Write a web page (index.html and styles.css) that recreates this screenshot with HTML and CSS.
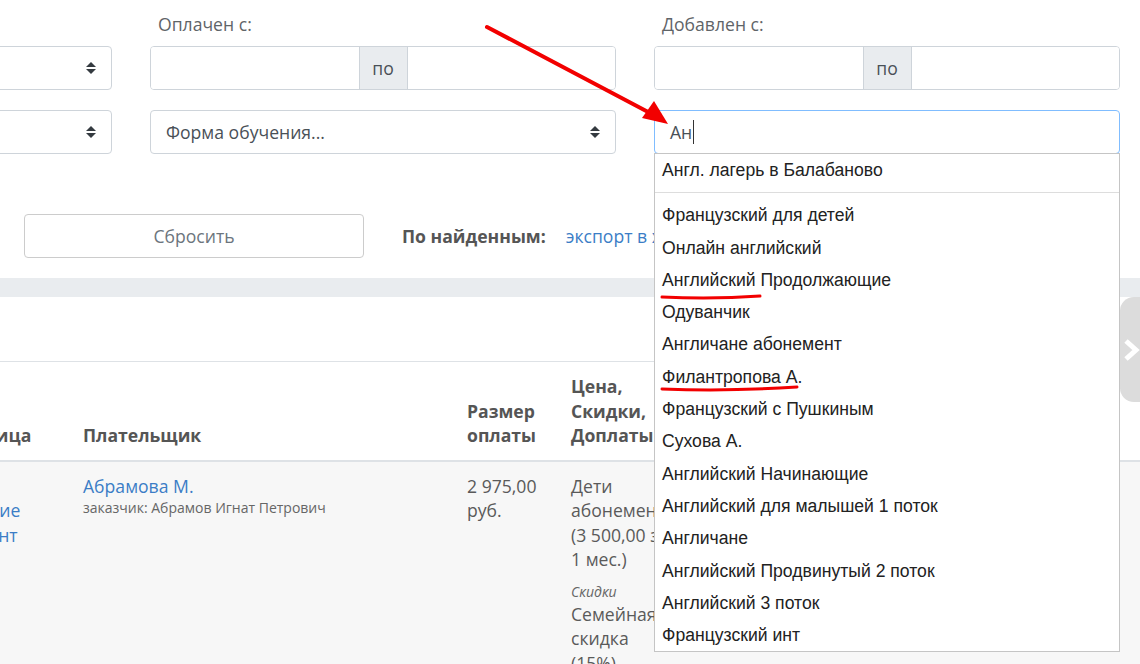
FILE: index.html
```html
<!DOCTYPE html>
<html lang="ru">
<head>
<meta charset="utf-8">
<title>Оплаты</title>
<link rel="stylesheet" href="styles.css">
</head>
<body>
<div class="page">
  <section class="filters">
    <div class="filter-grid">
      <div class="field">
        <div class="label">Статус:</div>
        <div class="select"><span class="select-text">Все</span>
          <svg class="arrows" viewBox="0 0 10 12" width="10" height="12"><polygon points="5,0 10,5 0,5"/><polygon points="0,7 10,7 5,12"/></svg>
        </div>
      </div>
      <div class="field">
        <div class="label">Оплачен с:</div>
        <div class="input-group">
          <div class="input"></div>
          <div class="addon">по</div>
          <div class="input"></div>
        </div>
      </div>
      <div class="field">
        <div class="label">Добавлен с:</div>
        <div class="input-group">
          <div class="input"></div>
          <div class="addon">по</div>
          <div class="input"></div>
        </div>
      </div>

      <div class="field">
        <div class="select"><span class="select-text">Все</span>
          <svg class="arrows" viewBox="0 0 10 12" width="10" height="12"><polygon points="5,0 10,5 0,5"/><polygon points="0,7 10,7 5,12"/></svg>
        </div>
      </div>
      <div class="field">
        <div class="select"><span class="select-text">Форма обучения...</span>
          <svg class="arrows" viewBox="0 0 10 12" width="10" height="12"><polygon points="5,0 10,5 0,5"/><polygon points="0,7 10,7 5,12"/></svg>
        </div>
      </div>
      <div class="field field-auto">
        <div class="input focused"><span>Ан</span><span class="caret"></span></div>
        <ul class="autocomplete">
          <li class="item">Англ. лагерь в Балабаново</li>
          <li class="divider"></li>
          <li class="item">Французский для детей</li>
          <li class="item">Онлайн английский</li>
          <li class="item">Английский Продолжающие</li>
          <li class="item">Одуванчик</li>
          <li class="item">Англичане абонемент</li>
          <li class="item">Филантропова А.</li>
          <li class="item">Французский с Пушкиным</li>
          <li class="item">Сухова А.</li>
          <li class="item">Английский Начинающие</li>
          <li class="item">Английский для малышей 1 поток</li>
          <li class="item">Англичане</li>
          <li class="item">Английский Продвинутый 2 поток</li>
          <li class="item">Английский 3 поток</li>
          <li class="item">Французский инт</li>
        </ul>
      </div>
    </div>

    <div class="actions">
      <button class="btn-reset" type="button">Сбросить</button>
      <div class="found">
        <span class="found-label">По найденным:</span>
        <a class="link" href="#">экспорт в xls</a>
      </div>
    </div>
  </section>

  <div class="band"></div>

  <section class="results">
    <div class="results-top"></div>
    <table class="table">
      <colgroup>
        <col class="c1"><col class="c2"><col class="c3"><col class="c4"><col class="c5">
      </colgroup>
      <thead>
        <tr>
          <th>Единица</th>
          <th>Плательщик</th>
          <th>Размер<br>оплаты</th>
          <th>Цена,<br>Скидки,<br>Доплаты</th>
          <th>Статус</th>
        </tr>
      </thead>
      <tbody>
        <tr>
          <td><a class="link" href="#">Курс<br>Занятие<br>Студент</a></td>
          <td>
            <a class="link" href="#">Абрамова М.</a>
            <div class="small">заказчик: Абрамов Игнат Петрович</div>
          </td>
          <td>2 975,00<br>руб.</td>
          <td>
            <div>Дети абонемент (3 500,00 за 1 мес.)</div>
            <div class="note">Скидки</div>
            <div>Семейная скидка<br>(15%)</div>
          </td>
          <td>Оплачен</td>
        </tr>
      </tbody>
    </table>
  </section>

  <div class="side-tab">
    <svg viewBox="0 0 20 24" width="20" height="24"><polyline points="4,3 14,12 4,21" fill="none" stroke="#ffffff" stroke-width="5"/></svg>
  </div>

  <svg class="annotations" width="1140" height="664" viewBox="0 0 1140 664">
    <line x1="487" y1="27" x2="650" y2="113" stroke="#f20000" stroke-width="4" stroke-linecap="round"/>
    <polygon points="668,124 642,118 654,101" fill="#f20000"/>
    <path d="M662,297 Q712,299.5 760,296" fill="none" stroke="#f20000" stroke-width="3" stroke-linecap="round"/>
    <path d="M662,389 Q730,391.5 797,387" fill="none" stroke="#f20000" stroke-width="3" stroke-linecap="round"/>
  </svg>
</div>
</body>
</html>
```

FILE: styles.css
```css
* {
  box-sizing: border-box;
}

html, body {
  margin: 0;
  padding: 0;
  background: #ffffff;
}

body {
  font-family: "Open Sans", "Liberation Sans", sans-serif;
  font-size: 17.6px;
  color: #555555;
  width: 1140px;
  height: 664px;
  overflow: hidden;
}

.page {
  position: relative;
  width: 1140px;
  height: 664px;
  overflow: hidden;
}

.filters {
  padding-top: 12px;
}

.filter-grid {
  display: grid;
  grid-template-columns: repeat(3, 466px);
  column-gap: 38px;
  row-gap: 20px;
  margin-left: -354px;
}

.field {
  position: relative;
}

.label {
  font-size: 17.6px;
  line-height: 24px;
  color: #5f6468;
  padding-left: 8px;
  margin-bottom: 10px;
}

.select,
.input-group,
.input {
  height: 44px;
  border: 1px solid #ced4da;
  border-radius: 4px;
  background: #ffffff;
}

.select {
  display: flex;
  align-items: center;
  justify-content: space-between;
  padding: 0 15px 0 15px;
  color: #495057;
}

.select-text {
  line-height: 24px;
}

.arrows {
  fill: #343a40;
  display: block;
}

.input-group {
  display: flex;
  overflow: hidden;
}

.input-group .input {
  flex: 1;
  border: none;
  border-radius: 0;
  height: 42px;
}

.addon {
  width: 49px;
  background: #e9ecef;
  border-left: 1px solid #ced4da;
  border-right: 1px solid #ced4da;
  display: flex;
  align-items: center;
  justify-content: center;
  color: #495057;
}

.input.focused {
  border-color: #80bdff;
  display: flex;
  align-items: center;
  padding-left: 15px;
  color: #495057;
}

.caret {
  display: inline-block;
  width: 1px;
  height: 24px;
  background: #333333;
  margin-left: 1px;
}

.autocomplete {
  position: absolute;
  left: 0;
  top: 43px;
  width: 466px;
  margin: 0;
  padding: 0;
  list-style: none;
  background: #ffffff;
  border: 1px solid #c5c5c5;
  font-family: "Liberation Sans", Arial, sans-serif;
  font-size: 17.6px;
  color: #222222;
  z-index: 20;
}

.autocomplete .item {
  line-height: 32.3px;
  padding-left: 7px;
  white-space: nowrap;
}

.autocomplete .divider {
  height: 1px;
  background: #dddddd;
  margin: 6px 0 6px;
}

.actions {
  display: flex;
  align-items: center;
  gap: 38px;
  margin-top: 60px;
  margin-left: 24px;
}

.btn-reset {
  width: 340px;
  height: 44px;
  border: 1px solid #cccccc;
  border-radius: 4px;
  background: #ffffff;
  font-family: "Open Sans", "Liberation Sans", sans-serif;
  font-size: 17.6px;
  color: #6c757d;
  padding: 0;
}

.found {
  display: flex;
  align-items: center;
  gap: 20px;
}

.found-label {
  font-weight: 700;
  color: #555555;
}

.link {
  color: #3b7dc6;
  text-decoration: none;
}

.band {
  height: 19px;
  margin-top: 20px;
  background: #e9ecef;
}

.results-top {
  height: 65px;
  border-bottom: 1px solid #dee2e6;
}

.table {
  border-collapse: collapse;
  margin-left: -62px;
  width: 1300px;
  table-layout: fixed;
}

.c1 { width: 133px; }
.c2 { width: 384px; }
.c3 { width: 104px; }
.c4 { width: 132px; }
.c5 { width: 547px; }

.table th,
.table td {
  padding: 12px;
  line-height: 24.5px;
  text-align: left;
}

.table th {
  vertical-align: bottom;
  font-weight: 700;
  color: #555555;
  border-bottom: 2px solid #dee2e6;
}

.table td {
  vertical-align: top;
  color: #5a5a5a;
  background: #f7f7f7;
  height: 300px;
}

.small {
  font-size: 14px;
  line-height: 20px;
  color: #666666;
}

.note {
  font-size: 14px;
  font-style: italic;
  line-height: 20px;
  margin-top: 10px;
  color: #666666;
}

.side-tab {
  position: absolute;
  left: 1120px;
  top: 297px;
  width: 60px;
  height: 105px;
  background: #dcdcdc;
  border-radius: 14px 0 0 14px;
  z-index: 5;
  display: flex;
  align-items: center;
  padding-left: 2px;
}

.side-tab svg {
  display: block;
}

.annotations {
  position: absolute;
  left: 0;
  top: 0;
  z-index: 50;
  pointer-events: none;
}
```
